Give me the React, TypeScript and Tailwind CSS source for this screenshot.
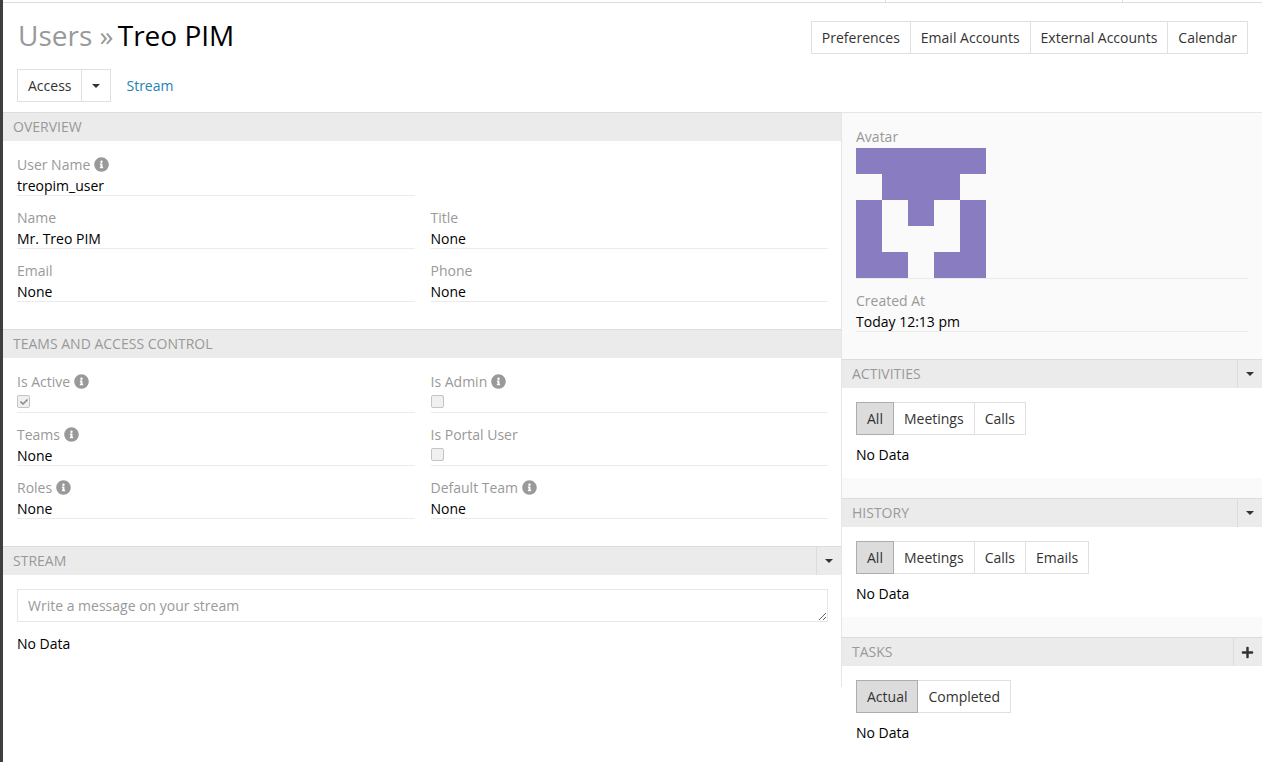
import { FaCheck, FaInfoCircle, FaPlus } from "react-icons/fa";

const Caret = () => (
  <span className="inline-block w-0 h-0 border-x-4 border-t-4 border-x-transparent border-t-[#333]" />
);

const Btn = ({ label, active, first }: { label: string; active?: boolean; first?: boolean }) => (
  <button
    className={`h-[33px] px-[10px] border text-[14px] ${first ? "" : "-ml-px"} ${
      active ? "relative bg-[#dcdcdc] border-[#adadad] text-[#333]" : "bg-white border-[#e0e0e0] text-[#333]"
    }`}
  >
    {label}
  </button>
);

const Check = ({ checked }: { checked?: boolean }) => (
  <span className="relative flex w-[13px] h-[13px]">
    <input
      type="checkbox"
      disabled
      defaultChecked={checked}
      className="appearance-none w-[13px] h-[13px] rounded-[2px] border border-[#c4c4c4] bg-[#f0f0f0]"
    />
    {checked && <FaCheck className="absolute left-[2.5px] top-[2.5px] text-[8px] text-[#888]" />}
  </span>
);

type FieldProps = { label: string; value?: string; info?: boolean; check?: "on" | "off" };

const Field = ({ label, value, info, check }: FieldProps) => (
  <div className="mb-[12px]">
    <div className="h-[21px] flex items-start gap-[4px] text-[#999] leading-[20px]">
      {label}
      {info && <FaInfoCircle className="text-[15px] mt-[2px] text-[#999]" />}
    </div>
    <div className="h-[20px] border-b border-[#ebebeb] text-black leading-[19px]">
      {check ? (
        <div className="pt-[2px]">
          <Check checked={check === "on"} />
        </div>
      ) : (
        value
      )}
    </div>
  </div>
);

const Heading = ({ title, action }: { title: string; action?: "caret" | "plus" }) => (
  <div className="h-[29px] flex justify-between border-t border-[#dcdcdc] bg-[#ebebeb]">
    <span className="pl-[10px] leading-[28px] uppercase text-[#999]">{title}</span>
    {action && (
      <span
        className={`h-[28px] flex items-center justify-center border-l border-[#dcdcdc] ${
          action === "plus" ? "w-[29px] pr-[2px]" : "w-[25px]"
        }`}
      >
        {action === "plus" ? <FaPlus className="text-[13px] text-[#333]" /> : <Caret />}
      </span>
    )}
  </div>
);

const FieldPanel = ({ title, fields }: { title: string; fields: (FieldProps | null)[] }) => (
  <section>
    <Heading title={title} />
    <div className="grid grid-cols-2 gap-x-4 pt-[14px] pb-[15px] pl-[14px] pr-[13px]">
      {fields.map((f, i) => (f ? <Field key={f.label} {...f} /> : <div key={i} />))}
    </div>
  </section>
);

const TabPanel = ({
  title,
  tabs,
  action,
  filler = true,
}: {
  title: string;
  tabs: string[];
  action: "caret" | "plus";
  filler?: boolean;
}) => (
  <section>
    <Heading title={title} action={action} />
    <div className="bg-white pt-[14px] px-[14px] pb-[13px]">
      <div className="flex mb-[10px]">
        {tabs.map((t, i) => (
          <Btn key={t} label={t} active={i === 0} first={i === 0} />
        ))}
      </div>
      <div className="h-[20px] leading-[20px] text-black">No Data</div>
    </div>
    {filler && <div className="h-[20px]" />}
  </section>
);

const avatarCells = [
  [0, 0, 5, 1],
  [1, 1, 3, 1],
  [0, 2, 1, 3],
  [2, 2, 1, 1],
  [4, 2, 1, 3],
  [1, 4, 1, 1],
  [3, 4, 1, 1],
];

export default function App() {
  return (
    <div className="h-screen overflow-hidden flex bg-white text-[14px] leading-[20px] font-['Open_Sans',sans-serif]">
      <div className="w-[3px] shrink-0 bg-[#3f3f3f]" />

      <div className="flex-1 min-w-0">
        <div className="h-[3px] mr-px flex border-b border-[#dcdcdc]">
          <div className="w-[882px]" />
          <div className="w-[238px] border-x border-[#dcdcdc]" />
        </div>

        <header className="h-[109px] px-[14px] pt-[18px]">
          <div className="flex justify-between mr-px">
            <h1 className="ml-px h-[33px] leading-[28px] text-[28px] text-black">
              <span className="text-[#999] mr-[-3px]">Users » </span>Treo PIM
            </h1>
            <div className="flex">
              {["Preferences", "Email Accounts", "External Accounts", "Calendar"].map((t, i) => (
                <Btn key={t} label={t} first={i === 0} />
              ))}
            </div>
          </div>
          <div className="flex items-center mt-[15px]">
            <Btn label="Access" first />
            <button className="-ml-px w-[30px] h-[33px] border border-[#e0e0e0] flex items-center justify-center">
              <Caret />
            </button>
            <a className="ml-[15px] text-[#1e82b4]">Stream</a>
          </div>
        </header>

        <main className="flex items-start">
          <div className="w-[839px] shrink-0 border-r border-[#e6e6e6] h-[575px]">
            <FieldPanel
              title="Overview"
              fields={[
                { label: "User Name", value: "treopim_user", info: true },
                null,
                { label: "Name", value: "Mr. Treo PIM" },
                { label: "Title", value: "None" },
                { label: "Email", value: "None" },
                { label: "Phone", value: "None" },
              ]}
            />
            <FieldPanel
              title="Teams and Access Control"
              fields={[
                { label: "Is Active", info: true, check: "on" },
                { label: "Is Admin", info: true, check: "off" },
                { label: "Teams", value: "None", info: true },
                { label: "Is Portal User", check: "off" },
                { label: "Roles", value: "None", info: true },
                { label: "Default Team", value: "None", info: true },
              ]}
            />
            <section>
              <Heading title="Stream" action="caret" />
              <div className="pt-[14px] pl-[14px] pr-[13px]">
                <textarea
                  rows={1}
                  placeholder="Write a message on your stream"
                  className="block w-full h-[33px] px-[10px] pt-[6px] pb-[4px] border border-[#e6e6e6] text-[14px] leading-[20px] placeholder:text-[#999]"
                />
                <div className="mt-[12px] h-[20px] text-black">No Data</div>
              </div>
            </section>
          </div>

          <aside className="flex-1 min-w-0 mr-px bg-[#fafafa]">
            <section className="border-t border-[#e6e6e6] h-[247px] pt-[14px] px-[14px]">
              <div className="h-[21px] leading-[20px] text-[#999]">Avatar</div>
              <div className="border-b border-[#ebebeb]">
                <svg width="130" height="130" viewBox="0 0 5 5" className="block" shapeRendering="crispEdges">
                  {avatarCells.map(([x, y, w, h], i) => (
                    <rect key={i} x={x} y={y} width={w} height={h} fill="#8a7cc0" />
                  ))}
                </svg>
              </div>
              <div className="mt-[12px]">
                <Field label="Created At" value="Today 12:13 pm" />
              </div>
            </section>
            <TabPanel title="Activities" tabs={["All", "Meetings", "Calls"]} action="caret" />
            <TabPanel title="History" tabs={["All", "Meetings", "Calls", "Emails"]} action="caret" />
            <TabPanel title="Tasks" tabs={["Actual", "Completed"]} action="plus" filler={false} />
            <div className="h-[100px] bg-white" />
          </aside>
        </main>
      </div>
    </div>
  );
}
